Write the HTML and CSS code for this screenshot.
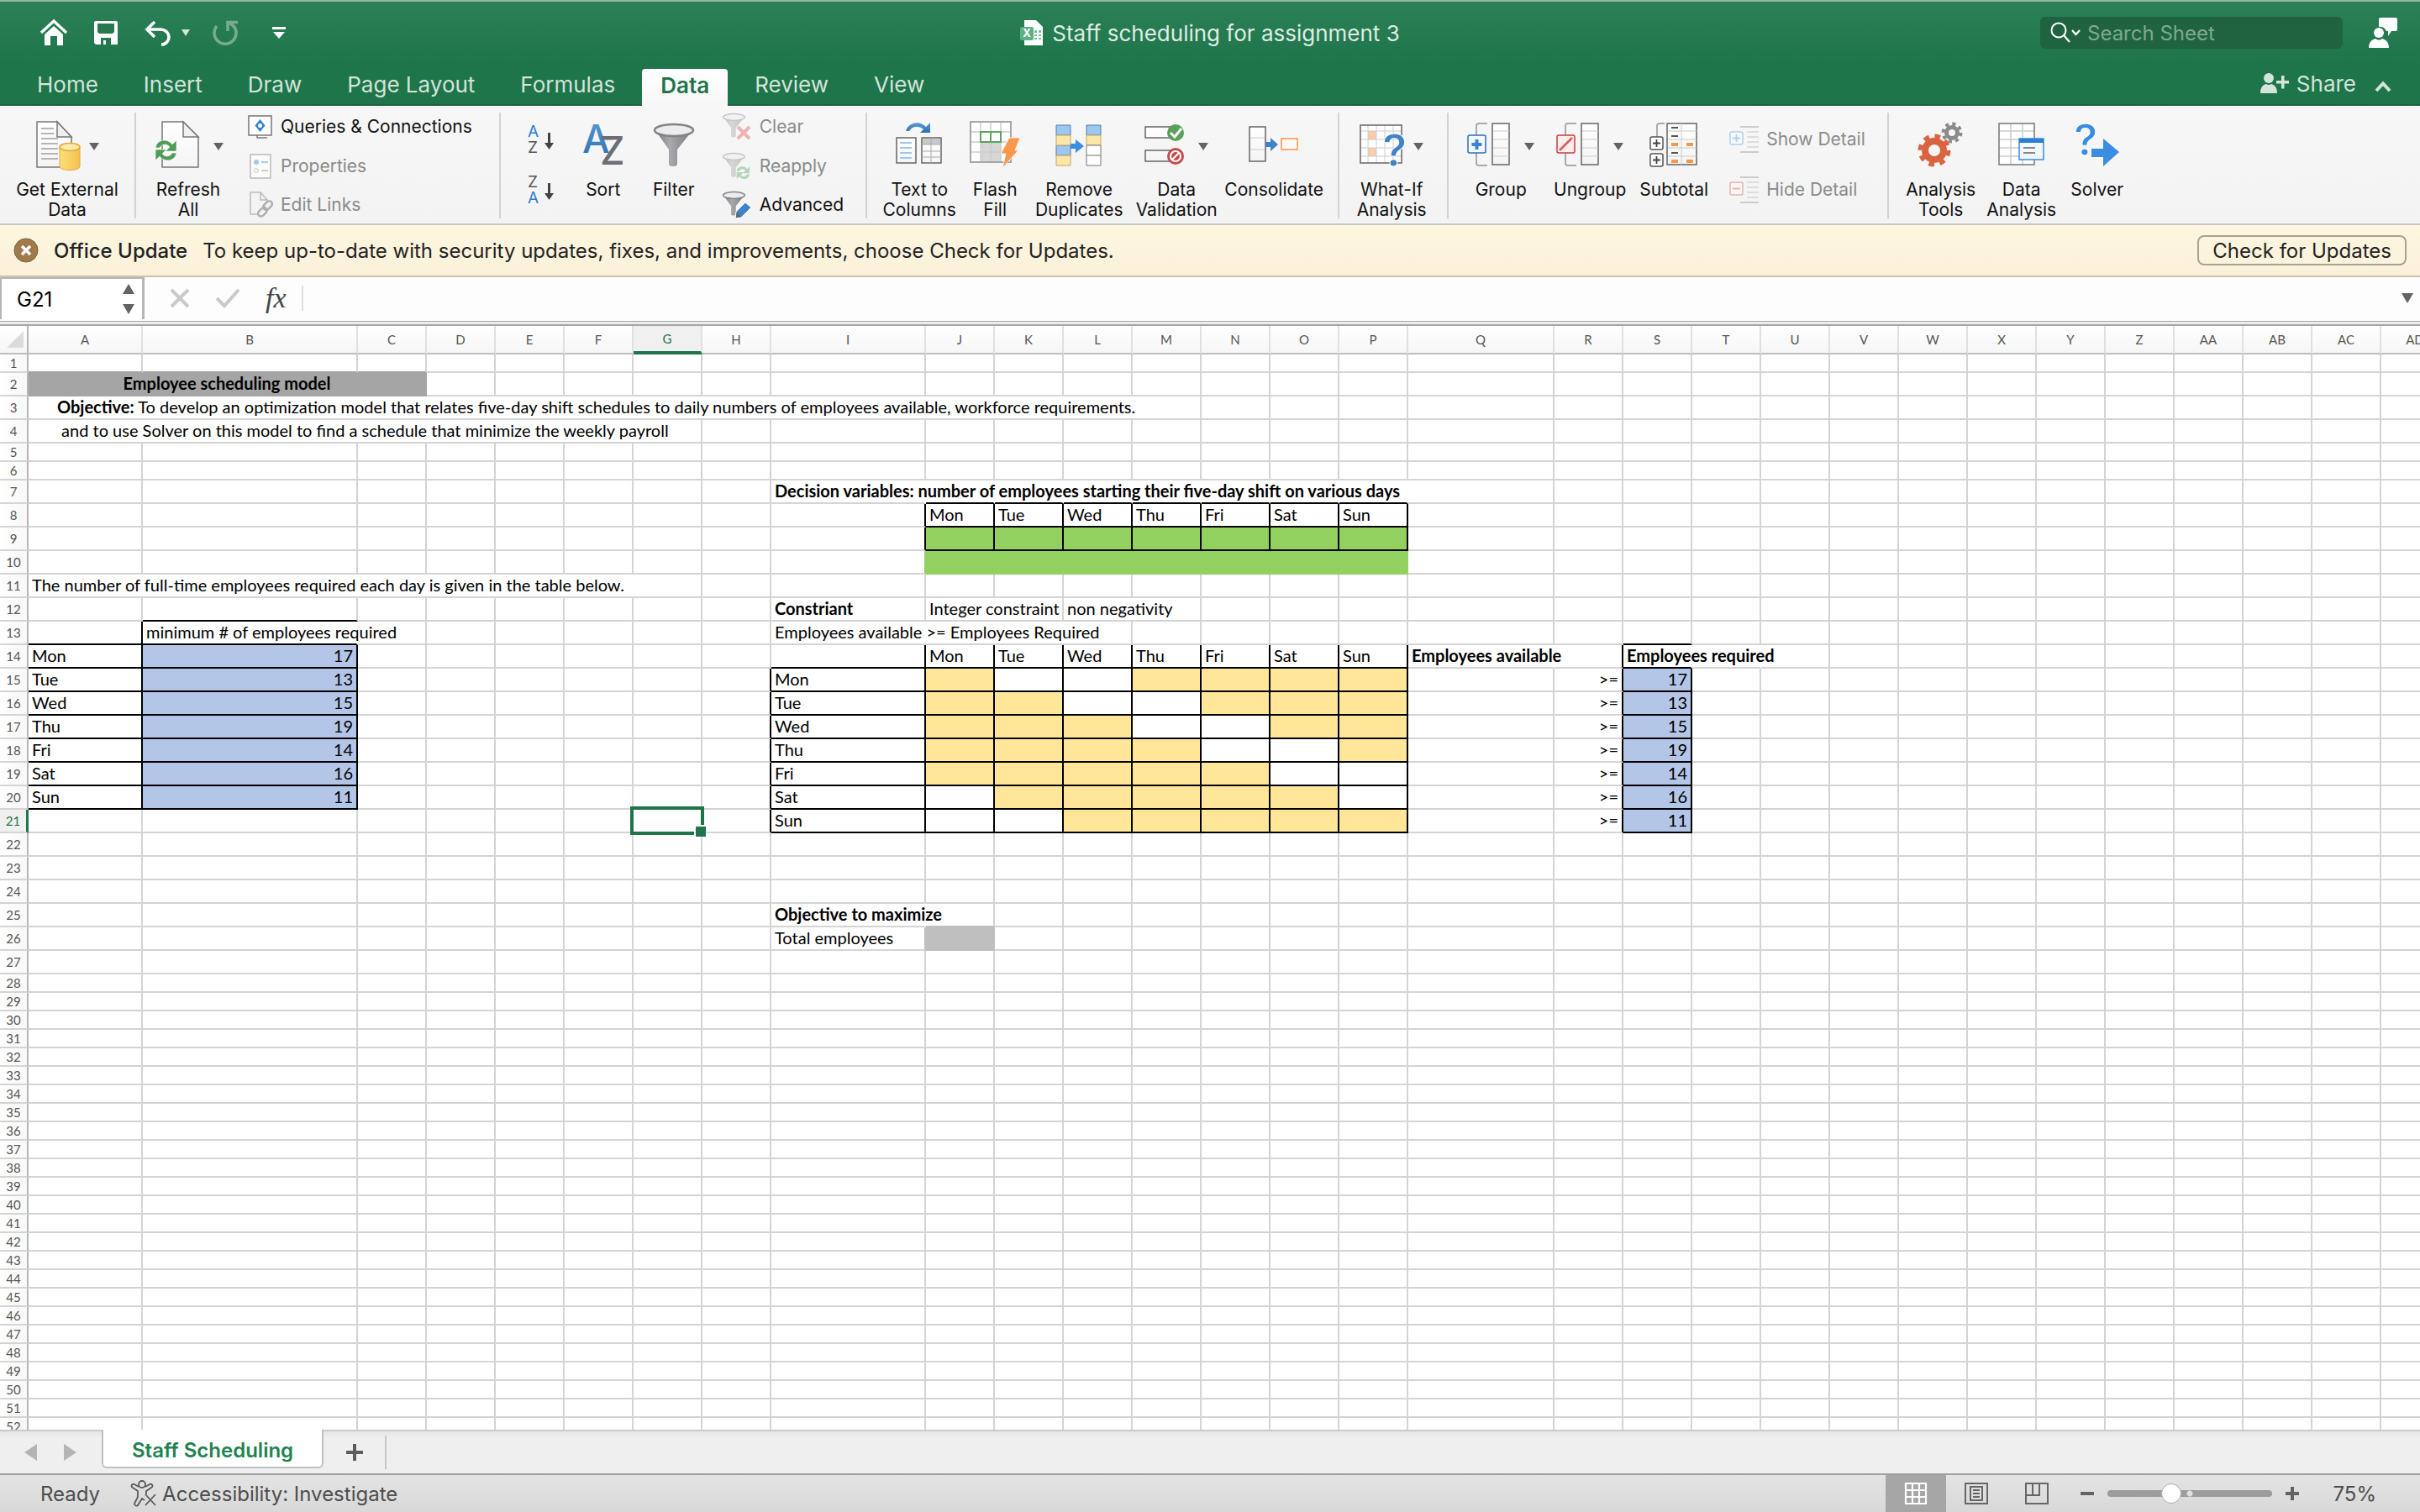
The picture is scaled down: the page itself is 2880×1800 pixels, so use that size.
FILE: index.html
```html
<!DOCTYPE html>
<html lang="en">
<head>
    <meta charset="UTF-8">
    <meta name="viewport" content="width=device-width, initial-scale=1.0">
    <title>Staff scheduling for assignment 3</title>
    <link rel="stylesheet" href="styles.css">
</head>
<body>
    <header class="app-header">
        <div class="title-row">
            <div class="quick-access">
                <button class="icon-btn" aria-label="Home">
                    <svg width="32" height="32" viewBox="0 0 32 32"><path d="M1 16 16 2l15 14" fill="none" stroke="#fff" stroke-width="3.4"/><path d="M5 18 16 8l11 10v13h-7V20h-8v11H5z" fill="#fff"/></svg>
                </button>
                <button class="icon-btn" aria-label="Save">
                    <svg width="32" height="32" viewBox="0 0 32 32"><path d="M4 2h24a2 2 0 0 1 2 2v26H4l-2-2V4a2 2 0 0 1 2-2z" fill="#fff"/><path d="M6 5h20v10l-2 2H8l-2-2z" fill="#26784e"/><path d="M10 22h12v8h-6v-5h-3v5h-3z" fill="#26784e"/></svg>
                </button>
                <button class="icon-btn undo" aria-label="Undo">
                    <svg width="32" height="32" viewBox="0 0 32 32"><path d="M12 3 3 12l9 9M4 12h14c8 0 11 5 11 9s-3 9-9 9" fill="none" stroke="#fff" stroke-width="3.6"/></svg>
                    <svg width="10" height="8" viewBox="0 0 10 8"><path d="M0 0h10L5 8z" fill="#d3e4da"/></svg>
                </button>
                <button class="icon-btn redo" aria-label="Redo" disabled>
                    <svg width="32" height="32" viewBox="0 0 32 32"><path d="M6 8a13 13 0 1 0 20 0L21 4M19 14V3.500h12" fill="none" stroke="#78ab8e" stroke-width="3.6"/></svg>
                </button>
                <button class="icon-btn" aria-label="Customize toolbar">
                    <svg width="16" height="16" viewBox="0 0 16 16"><path d="M0 1h16v3H0zM1 7h14l-7 8z" fill="#fff"/></svg>
                </button>
            </div>
            <h1 class="doc-title">
                <svg width="28" height="32" viewBox="0 0 28 32"><path d="M5 1h14l8 8v22H5z" fill="#fff"/><path d="M17 13h3v3h-3zm5 0h3v3h-3zm-5 5h3v2h-3zm5 0h3v2h-3zm-5 4h3v2h-3zm5 0h3v2h-3z" fill="#7cc09c"/><rect y="9" width="16" height="16" rx="2" fill="#5fae86"/><text x="8" y="21" class="file-x">X</text></svg>
                Staff scheduling for assignment 3
            </h1>
            <div class="title-tools">
                <label class="search">
                    <svg width="36" height="26" viewBox="0 0 36 26"><circle cx="10" cy="10" r="8.500" fill="none" stroke="#fff" stroke-width="2"/><path d="m16 16 7 8M26 10l4.500 5 4.500-5" fill="none" stroke="#fff" stroke-width="2.200"/></svg>
                    <input type="text" placeholder="Search Sheet" aria-label="Search Sheet">
                </label>
                <button class="icon-btn" aria-label="Feedback">
                    <svg width="36" height="38" viewBox="0 0 36 38"><path d="M15 1h18a2 2 0 0 1 2 2v12a2 2 0 0 1-2 2h-5l-4 6v-6h-2a8 8 0 0 0-9-5V3a2 2 0 0 1 2-2z" fill="#fff"/><circle cx="13" cy="19" r="6" fill="#fff"/><path d="M1 37c0-7 4-10 8-11q4 3 8 0c4 1 8 4 8 11z" fill="#fff"/></svg>
                </button>
            </div>
        </div>
        <nav class="tabs">
            <a class="tab" href="#">Home</a>
            <a class="tab" href="#">Insert</a>
            <a class="tab" href="#">Draw</a>
            <a class="tab" href="#">Page Layout</a>
            <a class="tab" href="#">Formulas</a>
            <a class="tab active" href="#">Data</a>
            <a class="tab" href="#">Review</a>
            <a class="tab" href="#">View</a>
            <button class="share">
                <svg width="36" height="26" viewBox="0 0 36 26"><circle cx="11" cy="7" r="6" fill="#d3e4da"/><path d="M1 25c0-7 3-10 7-11q3 2 6 0c4 1 7 4 7 11zM26 4h3.500v6H35v3.500h-5.500v6H26v-6h-6V10h6z" fill="#d3e4da"/></svg>
                Share
            </button>
            <button class="icon-btn collapse" aria-label="Collapse ribbon">
                <svg width="20" height="14" viewBox="0 0 20 14"><path d="m2 12 8-8.500 8 8.500" fill="none" stroke="#d3e4da" stroke-width="4"/></svg>
            </button>
        </nav>
    </header>

    <svg width="0" height="0" class="defs">
        <defs>
            <linearGradient id="blue" x1="0" y1="0" x2="0" y2="1"><stop offset="0" stop-color="#5b9bd5"/><stop offset="1" stop-color="#2a6fb5"/></linearGradient>
            <linearGradient id="grey" x1="0" y1="0" x2="1" y2="0"><stop offset="0" stop-color="#77777b"/><stop offset=".4" stop-color="#a9a9ad"/><stop offset="1" stop-color="#77777b"/></linearGradient>
            <linearGradient id="gold" x1="0" y1="0" x2="1" y2="0"><stop offset="0" stop-color="#fddf7c"/><stop offset="1" stop-color="#f5c04e"/></linearGradient>
            <linearGradient id="page" x1="0" y1="0" x2="0" y2="1"><stop offset="0" stop-color="#fff"/><stop offset="1" stop-color="#f4f4f4"/></linearGradient>
            <path id="cycle" d="M1 11C2 4 9 0 16 3c2 1 4 2 5 4l5-5v13H13l5-5c-4-5-10-3-12 1zM26 17c-1 7-8 11-15 8-2-1-4-2-5-4l-5 5V13h13l-5 5c4 5 10 3 12-1z"/>
            <g id="funnel"><path d="M1 7 18 31v17q0 3 4 3h2q4 0 4-3V31L47 7z" fill="url(#grey)"/><ellipse cx="24" cy="8" rx="23" ry="7" fill="#ececee" stroke="#838387" stroke-width="2.500"/></g>
        </defs>
    </svg>

    <section class="ribbon">
        <div class="group">
            <button class="tool tool-xl">
                <span class="tool-icon">
                    <svg width="54" height="64" viewBox="0 0 54 64"><path d="M2 3h24l17 18v36H2z" fill="url(#page)" stroke="#77777b" stroke-width="1.500"/><path d="M26 3v18h17z" fill="#f0f0f0" stroke="#77777b" stroke-width="1.500"/><path d="M7 11h15M7 17h15M7 23h20M7 29h20M7 35h20M7 41h20M7 47h20" stroke="#b5b5b8" stroke-width="2"/><path d="M29 33v23c0 6 24 6 24 0V33z" fill="url(#gold)" stroke="#e0a93c"/><ellipse cx="41" cy="33" rx="12" ry="4.500" fill="#fde9a8" stroke="#e0a93c" stroke-width="1.500"/></svg>
                    <i class="arrow"></i>
                </span>
                Get External<br>Data
            </button>
        </div>
        <div class="group">
            <button class="tool tool-md">
                <span class="tool-icon">
                    <svg width="56" height="64" viewBox="0 0 56 64"><path d="M11 3h25l18 18v36H11z" fill="url(#page)" stroke="#77777b" stroke-width="1.500"/><path d="M36 3v18h18z" fill="#f0f0f0" stroke="#77777b" stroke-width="1.500"/><use href="#cycle" x="2" y="23" fill="#4f9d54" stroke="#fff" stroke-width=".6"/></svg>
                    <i class="arrow far"></i>
                </span>
                Refresh<br>All
            </button>
            <div class="tool-list query-list">
                <button class="tool-row">
                    <svg width="32" height="32" viewBox="0 0 32 32"><path d="M2 3h27v23H2zM12 26v3h12" fill="#fff" stroke="#77777b" stroke-width="1.500"/><path d="M15.500 7l6 7.500-6 7.500-6-7.500z" fill="#2b7fd4"/><circle cx="15.500" cy="14.500" r="2.500" fill="#fff"/></svg>
                    Queries &amp; Connections
                </button>
                <button class="tool-row" disabled>
                    <svg width="32" height="32" viewBox="0 0 32 32"><path d="M4 2h24v28H4z" fill="#fbfbfb" stroke="#bbb" stroke-width="1.500"/><circle cx="11" cy="11" r="3" fill="#a9c9e8"/><circle cx="11" cy="21" r="2.500" fill="none" stroke="#ccc"/><path d="M17 11h8" stroke="#a9c9e8" stroke-width="2"/><path d="M17 21h8" stroke="#ccc" stroke-width="2"/></svg>
                    Properties
                </button>
                <button class="tool-row" disabled>
                    <svg width="32" height="32" viewBox="0 0 32 32"><path d="M12 27H4V1h12l8 9v3M16 1v9h8" fill="none" stroke="#bbb" stroke-width="1.500"/><g fill="none" stroke="#aeaeae" stroke-width="2.500"><rect x="12" y="21" width="12" height="7" rx="3.500" transform="rotate(-45 18 24)"/><rect x="19" y="13" width="12" height="7" rx="3.500" transform="rotate(-45 25 17)"/></g></svg>
                    Edit Links
                </button>
            </div>
        </div>
        <div class="group">
            <div class="az-list">
                <button class="az" aria-label="Sort ascending">
                    <svg width="36" height="36" viewBox="0 0 36 36"><text x="0" y="15" class="az-a">A</text><text x="0" y="34" class="az-z">Z</text><path d="M24 10h3v12h4l-5.500 8L20 22h4z" fill="#444"/></svg>
                </button>
                <button class="az" aria-label="Sort descending">
                    <svg width="36" height="36" viewBox="0 0 36 36"><text x="0" y="15" class="az-z">Z</text><text x="0" y="34" class="az-a">A</text><path d="M24 10h3v12h4l-5.500 8L20 22h4z" fill="#444"/></svg>
                </button>
            </div>
            <button class="tool tool-sm">
                <span class="tool-icon"><svg width="52" height="64" viewBox="0 0 52 64"><text x="1" y="40" class="sort-a">A</text><text x="22" y="54" class="sort-z">Z</text></svg></span>
                Sort
            </button>
            <button class="tool tool-sm">
                <span class="tool-icon"><svg width="50" height="64" viewBox="0 0 50 64"><use href="#funnel" x="1" y="5"/></svg></span>
                Filter
            </button>
            <div class="tool-list">
                <button class="tool-row" disabled>
                    <svg width="36" height="32" viewBox="0 0 36 32"><g opacity=".4"><use href="#funnel" transform="scale(.56)"/></g><path d="m18 16 14 14m0-14L18 30" stroke="#edb3b3" stroke-width="4"/></svg>
                    Clear
                </button>
                <button class="tool-row" disabled>
                    <svg width="36" height="32" viewBox="0 0 36 32"><g opacity=".4"><use href="#funnel" transform="scale(.56)"/></g><use href="#cycle" transform="translate(16 15) scale(.62)" fill="#b5d5b8"/></svg>
                    Reapply
                </button>
                <button class="tool-row">
                    <svg width="36" height="32" viewBox="0 0 36 32"><use href="#funnel" transform="scale(.56)"/><path d="m16 24 11-11 7 6-12 12-7 1z" fill="#3f83c8" stroke="#fff"/><path d="m17 24 5 6-6 1z" fill="#666"/></svg>
                    Advanced
                </button>
            </div>
        </div>
        <div class="group">
            <button class="tool tool-md">
                <span class="tool-icon">
                    <svg width="56" height="64" viewBox="0 0 56 64"><g fill="url(#page)" stroke="#666" stroke-width="1.500"><path d="M1 22h23v30H1zM31 22h23v30H31z"/></g><path d="M32 23h21v7H32z" fill="#c9c9cc"/><path d="M42 22v30M31 30h23M31 38h23M31 45h23" stroke="#aaa"/><path d="M5 28h14M5 34h14M5 40h14M5 46h14" stroke="#a3c6e8" stroke-width="2"/><path d="M12 14C15 3 29 1 36 9l5-5v12H29l4-4c-6-5-13-4-17 2z" fill="url(#blue)"/></svg>
                </span>
                Text to<br>Columns
            </button>
            <button class="tool tool-sm">
                <span class="tool-icon">
                    <svg width="62" height="64" viewBox="0 0 62 64"><path d="M2 3h48v48H2z" fill="#fff"/><path d="M14 28h24v23H14z" fill="#d6d6d6"/><path d="M14 3v48M26 3v48M38 3v48M2 15h48M2 27h48M2 39h48" stroke="#ccc" stroke-width="1.500"/><path d="M2 3h48v48H2z" fill="none" stroke="#a5a5a5" stroke-width="2"/><path d="M14 15h24v12H14zM26 15v12" fill="#fff" stroke="#5ea361" stroke-width="2"/><path d="M48 22h13l-6 15h4L40 58l4-17h-6z" fill="#fd9749" stroke="#f4f4f4" stroke-width="1"/></svg>
                </span>
                Flash<br>Fill
            </button>
            <button class="tool tool-lg">
                <span class="tool-icon">
                    <svg width="56" height="64" viewBox="0 0 56 64"><path d="M1 7h17v12H1zM1 31h17v12H1zM37 7h17v12H37z" fill="#9cc7f1" stroke="#4f7fae"/><path d="M1 19h17v12H1zM1 43h17v12H1zM37 19h17v12H37z" fill="#fee6a8" stroke="#c2a766"/><path d="M37 31h17v24H37zM37 43h17" fill="#fdfdfd" stroke="#777"/><path d="M18 29h6v-5l10 8-10 8v-5h-6z" fill="#3a8de0"/></svg>
                </span>
                Remove<br>Duplicates
            </button>
            <button class="tool tool-lg">
                <span class="tool-icon">
                    <svg width="48" height="64" viewBox="0 0 48 64"><path d="M1 9h30v13H1zM1 37h30v13H1z" fill="url(#page)" stroke="#666" stroke-width="1.500"/><circle cx="37" cy="16" r="10" fill="#5a9f5a"/><path d="m31 16 5 5 8-10" fill="none" stroke="#fff" stroke-width="3"/><circle cx="37" cy="44" r="10" fill="#c9494b"/><circle cx="37" cy="44" r="6" fill="none" stroke="#fff" stroke-width="2.200"/><path d="m32.500 48.500 9-9" stroke="#fff" stroke-width="2.200"/></svg>
                    <i class="arrow far"></i>
                </span>
                Data<br>Validation
            </button>
            <button class="tool tool-lg">
                <span class="tool-icon">
                    <svg width="60" height="64" viewBox="0 0 60 64"><path d="M1 9h19v41H1z" fill="url(#page)" stroke="#666" stroke-width="1.500"/><path d="M2 22h17M2 36h17" stroke="#ccc"/><path d="M20 27h6v-5l9 8-9 8v-5h-6z" fill="#3f83c8"/><path d="M39 23h19v13H39z" fill="#fffaf5" stroke="#f7964c" stroke-width="1.500"/></svg>
                </span>
                Consolidate
            </button>
        </div>
        <div class="group">
            <button class="tool tool-md">
                <span class="tool-icon">
                    <svg width="54" height="64" viewBox="0 0 54 64"><path d="M1 7h49v45H1z" fill="#fff"/><path d="M10 14h10v10H10zM10 34h10v10H10z" fill="#f9cba6"/><path d="M10 7v45M20 7v45M30 7v45M40 7v45M1 14h49M1 24h49M1 34h49M1 44h49" stroke="#ccc"/><path d="M1 7h49v45H1z" fill="none" stroke="#666" stroke-width="1.500"/><text x="27" y="56" class="what-if">?</text></svg>
                    <i class="arrow"></i>
                </span>
                What-If<br>Analysis
            </button>
        </div>
        <div class="group">
            <button class="tool tool-md">
                <span class="tool-icon">
                    <svg width="52" height="64" viewBox="0 0 52 64"><path d="M24 5H14q-3 0-3 3v44q0 3 3 3h10" fill="none" stroke="#aaa" stroke-width="2"/><path d="M30 5h20v49H30z" fill="url(#page)" stroke="#666" stroke-width="1.500"/><path d="M31 14h19M31 24h19M31 34h19M31 44h19" stroke="#ccc"/><rect x="1" y="19" width="21" height="21" rx="2" fill="#f3f8fd" stroke="#2870b8" stroke-width="1.500"/><path d="M11.500 24v12M5.500 30h12" stroke="#3f83c8" stroke-width="4"/></svg>
                    <i class="arrow far"></i>
                </span>
                Group
            </button>
            <button class="tool tool-lg">
                <span class="tool-icon">
                    <svg width="52" height="64" viewBox="0 0 52 64"><path d="M24 5H14q-3 0-3 3v44q0 3 3 3h10" fill="none" stroke="#aaa" stroke-width="2"/><path d="M30 5h20v49H30z" fill="url(#page)" stroke="#666" stroke-width="1.500"/><path d="M31 14h19M31 24h19M31 34h19M31 44h19" stroke="#ccc"/><rect x="1" y="19" width="21" height="21" rx="2" fill="#fdeeee" stroke="#c93a3d" stroke-width="1.500"/><path d="m4 37 15-15" stroke="#d9595b" stroke-width="2.500"/></svg>
                    <i class="arrow far"></i>
                </span>
                Ungroup
            </button>
            <button class="tool tool-sm">
                <span class="tool-icon">
                    <svg width="58" height="64" viewBox="0 0 58 64"><path d="M18 5h-6q-3 0-3 3v14" fill="none" stroke="#aaa" stroke-width="2"/><path d="M21 5h35v49H21z" fill="url(#page)" stroke="#666" stroke-width="1.500"/><path d="M38 5v49M22 14h34M22 24h34M22 34h34M22 44h34" stroke="#ccc"/><path d="M26 10h8M26 20h8M26 40h8" stroke="#555" stroke-width="2"/><path d="M26 30h8M44 30h8M26 50h8M44 50h8" stroke="#f7964c" stroke-width="4"/><rect x="1" y="21" width="15" height="15" rx="2" fill="#fff" stroke="#555" stroke-width="1.500"/><rect x="1" y="41" width="15" height="15" rx="2" fill="#fff" stroke="#555" stroke-width="1.500"/><path d="M8.500 24v9M4 28.500h9M8.500 44v9M4 48.500h9" stroke="#444" stroke-width="1.800"/></svg>
                </span>
                Subtotal
            </button>
            <div class="tool-list detail-list">
                <button class="tool-row" disabled>
                    <svg width="36" height="32" viewBox="0 0 36 32"><path d="M13 1h22M13 31h22" stroke="#ccc" stroke-width="2"/><path d="M21 7h14M21 13h14M21 19h14M21 25h14" stroke="#ddd" stroke-width="2"/><rect x="1" y="7" width="15" height="15" rx="2" fill="#f4f9fd" stroke="#b3cfe8" stroke-width="1.500"/><path d="M8.500 10v9M4 14.500h9" stroke="#b3cfe8" stroke-width="1.800"/></svg>
                    Show Detail
                </button>
                <button class="tool-row" disabled>
                    <svg width="36" height="32" viewBox="0 0 36 32"><path d="M13 1h22M13 31h22" stroke="#ccc" stroke-width="2"/><path d="M21 7h14M21 13h14M21 19h14M21 25h14" stroke="#ddd" stroke-width="2"/><rect x="1" y="7" width="15" height="15" rx="2" fill="#fdf4f4" stroke="#e3b2b3" stroke-width="1.500"/><path d="M4 14.500h9" stroke="#e3b2b3" stroke-width="1.800"/></svg>
                    Hide Detail
                </button>
            </div>
        </div>
        <div class="group">
            <button class="tool tool-md">
                <span class="tool-icon">
                    <svg width="56" height="64" viewBox="0 0 56 64"><g fill="none"><circle cx="41" cy="16" r="6.500" stroke="#8b8b8f" stroke-width="5"/><circle cx="41" cy="16" r="10.500" stroke="#8b8b8f" stroke-width="4" stroke-dasharray="4.120 4.120"/><circle cx="20" cy="37" r="11" stroke="#d9643f" stroke-width="8"/><circle cx="20" cy="37" r="17" stroke="#d9643f" stroke-width="5" stroke-dasharray="6.670 6.670"/></g></svg>
                </span>
                Analysis<br>Tools
            </button>
            <button class="tool tool-md">
                <span class="tool-icon">
                    <svg width="56" height="64" viewBox="0 0 56 64"><path d="M1 5h42v49H1z" fill="#fff"/><path d="M15 5v49M29 5v49M1 14h42M1 24h42M1 34h42M1 44h42" stroke="#ccc" stroke-width="1.500"/><path d="M1 5h42v49H1z" fill="none" stroke="#777" stroke-width="1.500"/><path d="M25 23h29v25H25z" fill="#f1f7fd" stroke="#3a8de0" stroke-width="1.500"/><path d="M25 23h29v5H25z" fill="#2b7fd4"/><path d="M30 34h14M30 40h14" stroke="#888" stroke-width="2"/></svg>
                </span>
                Data<br>Analysis
            </button>
            <button class="tool tool-sm">
                <span class="tool-icon">
                    <svg width="56" height="64" viewBox="0 0 56 64"><text x="0" y="43" class="solver-q">?</text><path d="M21 35h14V23l19 16-19 17V45H21z" fill="#3a8de0"/></svg>
                </span>
                Solver
            </button>
        </div>
    </section>

    <div class="update-bar">
        <button class="icon-btn" aria-label="Dismiss">
            <svg width="30" height="30" viewBox="0 0 30 30"><circle cx="15" cy="15" r="14" fill="#a17a4c" stroke="#7d5f3b"/><path d="m10 10 10 10m0-10L10 20" stroke="#fff" stroke-width="3.500"/></svg>
        </button>
        <strong>Office Update</strong>
        <span>To keep up-to-date with security updates, fixes, and improvements, choose Check for Updates.</span>
        <button class="update-btn">Check for Updates</button>
    </div>

    <div class="formula-bar">
        <div class="name-box">
            <input type="text" value="G21" aria-label="Name box">
            <svg width="16" height="36" viewBox="0 0 16 36"><path d="M8 0l7 12H1zM8 36l7-12H1z" fill="#636363"/></svg>
        </div>
        <button class="icon-btn" aria-label="Cancel" disabled>
            <svg width="24" height="24" viewBox="0 0 24 24"><path d="m2 2 20 20M22 2 2 22" stroke="#c9c9c9" stroke-width="4"/></svg>
        </button>
        <button class="icon-btn" aria-label="Enter" disabled>
            <svg width="30" height="24" viewBox="0 0 30 24"><path d="m2 12 9 9L28 2" fill="none" stroke="#c9c9c9" stroke-width="4"/></svg>
        </button>
        <button class="fx">fx</button>
        <input class="formula" type="text" aria-label="Formula">
        <button class="icon-btn expand" aria-label="Expand formula bar">
            <svg width="14" height="12" viewBox="0 0 14 12"><path d="M0 0h14L7 12z" fill="#636363"/></svg>
        </button>
    </div>

    <main class="sheet">
        <table id="grid"></table>
    </main>

    <div class="sheet-tabs">
        <button class="icon-btn" aria-label="Previous sheet"><svg width="16" height="20" viewBox="0 0 16 20"><path d="M15 0v20L0 10z" fill="#b4b4b4"/></svg></button>
        <button class="icon-btn" aria-label="Next sheet"><svg width="16" height="20" viewBox="0 0 16 20"><path d="M1 0v20l15-10z" fill="#b4b4b4"/></svg></button>
        <a class="sheet-tab" href="#">Staff Scheduling</a>
        <button class="icon-btn add-sheet" aria-label="Add sheet"><svg width="22" height="22" viewBox="0 0 22 22"><path d="M11 1v20M1 11h20" stroke="#5d5d5d" stroke-width="4"/></svg></button>
    </div>

    <footer class="status-bar">
        <span>Ready</span>
        <button class="access">
            <svg width="32" height="32" viewBox="0 0 32 32" fill="none" stroke="#5a5a5a" stroke-width="1.800"><circle cx="14" cy="5" r="4"/><path d="M10 8 5 5C2 4 0 7 3 9l6 4v7l-4 8c0 3 3 3 4 2l5-8 3 2M18 8l5-3c3-1 5 2 2 4l-6 4v4M18 17l12 13M30 17 18 30"/></svg>
            Accessibility: Investigate
        </button>
        <div class="view-controls">
            <button class="view active" aria-label="Normal view">
                <svg width="28" height="28" viewBox="0 0 28 28"><path d="M2 2h24v24H2zM10 2v24M18 2v24M2 10h24M2 18h24" fill="none" stroke="#fff" stroke-width="2.200"/></svg>
            </button>
            <button class="view" aria-label="Page layout view">
                <svg width="28" height="28" viewBox="0 0 28 28"><path d="M1 2h26v24H1zM7 6h14v16H7zM10 10h8M10 14h8M10 18h8" fill="none" stroke="#666" stroke-width="2"/></svg>
            </button>
            <button class="view" aria-label="Page break view">
                <svg width="28" height="28" viewBox="0 0 28 28"><path d="M1 2h26v24H1zM9 2v14M17 2v14M1 16h17" fill="none" stroke="#666" stroke-width="2"/></svg>
            </button>
        </div>
        <div class="zoom">
            <button class="icon-btn" aria-label="Zoom out"><svg width="16" height="16" viewBox="0 0 16 16"><path d="M0 8h16" stroke="#636363" stroke-width="4"/></svg></button>
            <input type="range" min="0" max="100" value="37" aria-label="Zoom">
            <button class="icon-btn" aria-label="Zoom in"><svg width="16" height="16" viewBox="0 0 16 16"><path d="M0 8h16M8 0v16" stroke="#636363" stroke-width="4"/></svg></button>
            <span class="zoom-value">75%</span>
        </div>
    </footer>

    <script src="script.js"></script>
</body>
</html>
```
FILE: styles.css
```css
* {
    box-sizing: border-box;
}
body {
    margin: 0;
    height: 100vh;
    display: flex;
    flex-direction: column;
    overflow: hidden;
    font-family: Inter, "Liberation Sans", sans-serif;
    font-size: 24px;
    color: #222;
    background: #fff;
}
button, input {
    font: inherit;
    color: inherit;
    background: none;
    border: none;
    padding: 0;
    margin: 0;
}
a {
    color: inherit;
    text-decoration: none;
}
svg {
    display: block;
    flex-shrink: 0;
    overflow: visible;
}
.defs {
    position: absolute;
}
.icon-btn {
    display: flex;
    align-items: center;
}

/* Header */
.app-header {
    border-top: 2px solid #8fb8a2;
    border-bottom: 2px solid #1a6440;
    background: linear-gradient(#2d8057, #1e754a 60%, #1e754a);
}
.title-row {
    display: grid;
    grid-template-columns: 1fr auto 1fr;
    align-items: center;
    height: 74px;
}
.quick-access {
    display: flex;
    align-items: center;
    gap: 30px;
    padding-left: 48px;
}
.undo {
    gap: 12px;
}
.redo {
    margin-right: 10px;
    margin-left: -4px;
}
.doc-title {
    display: flex;
    align-items: center;
    gap: 10px;
    margin: 0;
    font-size: 26px;
    font-weight: 400;
    color: #dfece5;
}
.file-x {
    font-size: 13px;
    font-weight: 700;
    fill: #fff;
    text-anchor: middle;
}
.title-tools {
    display: flex;
    align-items: center;
    justify-content: flex-end;
    gap: 30px;
    padding-right: 26px;
}
.search {
    display: flex;
    align-items: center;
    gap: 8px;
    width: 360px;
    height: 38px;
    padding: 0 12px;
    border-radius: 6px;
    background: #1f6341;
}
.search input {
    flex: 1;
    min-width: 0;
    outline: none;
}
.search input::placeholder {
    color: #7fa992;
    opacity: 1;
}
.tabs {
    display: flex;
    align-items: center;
    gap: 10px;
    height: 42px;
    margin-top: 6px;
    padding: 0 34px 0 22px;
    font-size: 26px;
}
.tab {
    padding: 0 22px;
    height: 44px;
    line-height: 40px;
    color: #d3e4da;
}
.tab.active {
    background: linear-gradient(#fff, #f7f7f7);
    color: #1e754a;
    font-weight: 600;
    border-radius: 4px 4px 0 0;
    margin-bottom: -2px;
}
.share {
    display: flex;
    align-items: center;
    gap: 8px;
    margin-left: auto;
    padding-bottom: 8px;
    color: #d3e4da;
}
.collapse {
    margin-left: 12px;
}

/* Ribbon */
.ribbon {
    display: flex;
    padding: 8px 0 6px;
    background: linear-gradient(#f7f7f7, #f3f3f3);
    border-bottom: 2px solid #c8c8c8;
    font-size: 21px;
    line-height: 24px;
}
.group {
    display: flex;
    padding: 0 18px 0 14px;
    border-right: 2px solid #d2d2d2;
}
.group:first-child {
    padding: 0;
}
.group:last-child {
    border-right: none;
}
.tool {
    display: flex;
    flex-direction: column;
    align-items: center;
    height: 126px;
    padding-top: 8px;
    color: #111;
    white-space: nowrap;
}
.tool-sm { width: 84px; }
.tool-md { width: 96px; }
.tool-lg { width: 116px; }
.tool-xl { width: 160px; }
.tool-icon {
    display: flex;
    align-items: center;
    gap: 10px;
    margin-bottom: 8px;
}
.arrow {
    border: 6px solid transparent;
    border-top: 9px solid #636363;
    border-bottom: none;
}
.arrow.far {
    margin-left: 6px;
}
.tool-list {
    display: flex;
    flex-direction: column;
    justify-content: space-between;
    padding: 1px 8px 0 16px;
}
.tool-row {
    display: flex;
    align-items: center;
    gap: 8px;
    height: 32px;
    color: #111;
    white-space: nowrap;
}
.tool-row:disabled {
    color: #8a8a8a;
}
.query-list {
    padding-left: 22px;
    padding-right: 14px;
}
.detail-list {
    justify-content: flex-start;
    gap: 28px;
    padding: 16px 8px 0 24px;
}
.az-list {
    display: flex;
    flex-direction: column;
    gap: 24px;
    padding: 14px 12px 0 18px;
}
.az-a, .az-z {
    font-size: 19px;
    fill: #555;
}
.az-a {
    fill: #2b7fd4;
}
.sort-a, .sort-z {
    font-size: 46px;
    font-weight: 500;
    fill: url(#blue);
}
.sort-z {
    fill: #6e6e72;
}
.what-if, .solver-q {
    font-size: 54px;
    font-weight: 600;
    fill: #3f83c8;
    stroke: #fff;
    stroke-width: 1px;
}
.solver-q {
    font-size: 52px;
    fill: #3a8de0;
}

/* Update notice */
.update-bar {
    display: flex;
    align-items: center;
    gap: 18px;
    height: 62px;
    padding: 0 16px;
    background: linear-gradient(#fef6e0, #fbf1da);
    border-bottom: 2px solid #c9c2ae;
}
.update-bar strong {
    font-weight: 500;
}
.update-btn {
    height: 36px;
    margin-left: auto;
    padding: 0 16px;
    border: 2px solid #a8a294;
    border-radius: 8px;
}

/* Formula bar */
.formula-bar {
    display: flex;
    align-items: center;
    height: 58px;
    gap: 30px;
    padding-bottom: 6px;
    border-bottom: 2px solid #a6a6a6;
    background: linear-gradient(#fdfdfd 52px, #a6a6a6 52px, #a6a6a6 53px, #ececec 53px);
}
.name-box {
    display: flex;
    align-items: center;
    width: 172px;
    height: 50px;
    padding: 0 8px 0 18px;
    border: 2px solid #b5b5b5;
    border-width: 2px 3px 0 2px;
    background: #fff;
}
.name-box input {
    flex: 1;
    min-width: 0;
    color: #000;
}
.fx {
    font: italic 34px "Liberation Serif", serif;
    line-height: 36px;
    color: #444;
}
.formula {
    flex: 1;
    height: 30px;
    margin-left: -12px;
    border-left: 2px solid #ddd;
}
.expand {
    padding-right: 8px;
}

/* Grid */
.sheet {
    flex: 1;
    min-height: 0;
    overflow: hidden;
}
#grid {
    table-layout: fixed;
    border-collapse: separate;
    border-spacing: 0;
    font-family: Lato, sans-serif;
    font-size: 20px;
    line-height: 20px;
    color: #000;
}
#grid th, #grid td {
    padding: 0 4px;
    border-right: 2px solid #d4d4d4;
    border-bottom: 2px solid #d4d4d4;
    white-space: nowrap;
    text-align: left;
    vertical-align: middle;
}
#grid td {
    padding-bottom: 2px;
}
#grid th {
    padding: 0;
    font-size: 15px;
    font-weight: 400;
    color: #555;
    text-align: center;
    background: #fafafa;
}
#grid thead th {
    height: 34px;
    border-bottom-color: #bdbdbd;
    border-right-color: #e0e0e0;
    background: linear-gradient(#fff, #f6f6f6);
}
#grid tbody th, #grid thead th:first-child {
    border-right-color: #b5b5b5;
}
#grid tbody th {
    background: linear-gradient(90deg, #fff, #f8f8f8);
}
#grid .corner svg {
    margin-left: auto;
    margin-right: 4px;
}
#grid thead .current {
    border-bottom: 4px solid #1e754a;
    color: #1e754a;
    background: #f0f0f0;
}
#grid tbody .current {
    border-right: 3px solid #1e754a;
    color: #1e754a;
    background: #f0f0f0;
}
#grid .short { height: 22px; }
#grid .tall { height: 28px; }
#grid .open { border-right-color: #fff; }
#grid .right { border-right-color: #000; }
#grid .bottom { border-bottom-color: #000; }
#grid .bold { font-weight: 700; }
#grid .num { text-align: right; }
#grid .center { text-align: center; }
#grid .clip { overflow: hidden; }
#grid .blue { background: #b4c6e7; }
#grid .yellow { background: #ffe699; }
#grid .green { background: #92d05f; }
#grid .gray {
    background: #a5a5a5;
    border-color: #a5a5a5;
}
#grid .silver {
    background: #bfbfbf;
    border-color: #bfbfbf;
}
#grid .edge-gray { border-bottom-color: #a5a5a5; }
#grid .green-plain { border-color: #92d05f; }
#grid .edge-green { border-right-color: #92d05f; }
#grid .silver-right { border-right-color: #bfbfbf; }
#grid .silver-bottom { border-bottom-color: #bfbfbf; }
#grid .intro { padding-left: 34px; }
#grid .selected {
    position: relative;
}
.selection {
    position: absolute;
    top: -4px;
    right: -4px;
    bottom: -4px;
    left: -4px;
    border: 4px solid #1e754a;
}
.selection::after {
    content: "";
    position: absolute;
    right: -6px;
    bottom: -6px;
    width: 12px;
    height: 12px;
    border: 2px solid #fff;
    border-width: 2px 0 0 2px;
    background: #1e754a;
    background-clip: padding-box;
}

/* Sheet tabs */
.sheet-tabs {
    display: flex;
    align-items: center;
    height: 52px;
    padding-left: 29px;
    border-top: 2px solid #cacaca;
    background: linear-gradient(#e6e6e6, #efefef 8px);
}
.sheet-tabs .icon-btn {
    margin-right: 30px;
}
.sheet-tab {
    align-self: flex-start;
    height: 46px;
    margin-top: -2px;
    padding: 0 34px;
    line-height: 50px;
    font-weight: 600;
    color: #21834f;
    background: #fff;
    border: 2px solid #c0c0c0;
    border-top: none;
    border-radius: 0 0 6px 6px;
}
.sheet-tabs .add-sheet {
    height: 40px;
    margin: 0;
    padding: 0 25px 0 26px;
    border-right: 2px solid #c8c8c8;
}

/* Status bar */
.status-bar {
    display: flex;
    align-items: center;
    height: 46px;
    padding-left: 48px;
    border-top: 2px solid #a0a0a0;
    background: linear-gradient(#e4e4e4, #d8d8d8);
    color: #4d4d4d;
}
.access {
    display: flex;
    align-items: center;
    gap: 6px;
    margin-left: 36px;
}
.view-controls {
    display: flex;
    margin-left: auto;
    height: 100%;
}
.view {
    display: flex;
    align-items: center;
    justify-content: center;
    width: 72px;
}
.view.active {
    background: #a6a6a6;
}
.zoom {
    display: flex;
    align-items: center;
    gap: 16px;
    margin-left: 16px;
    padding-right: 52px;
}
.zoom input {
    appearance: none;
    width: 196px;
    height: 8px;
    border-radius: 4px;
    background: radial-gradient(circle at center, #e0e0e0 3px, #9c9c9c 4px);
}
.zoom input::-webkit-slider-thumb {
    appearance: none;
    width: 24px;
    height: 24px;
    border-radius: 50%;
    border: 1px solid #aaa;
    background: #fff;
}
.zoom-value {
    margin-left: 24px;
}
```
FILE: script.js
```js
const columns = [
    ['A', 136], ['B', 256], ['C', 82], ['D', 82], ['E', 82], ['F', 82], ['G', 82], ['H', 82],
    ['I', 184], ['J', 82], ['K', 82], ['L', 82], ['M', 82], ['N', 82], ['O', 82], ['P', 82],
    ['Q', 174], ['R', 82], ['S', 82], ['T', 82], ['U', 82], ['V', 82], ['W', 82], ['X', 82],
    ['Y', 82], ['Z', 82], ['AA', 82], ['AB', 82], ['AC', 82], ['AD', 82]
];
const headWidth = 34;
const shortRows = [1, 5, 6];
const days = ['Mon', 'Tue', 'Wed', 'Thu', 'Fri', 'Sat', 'Sun'];
const required = [17, 13, 15, 19, 14, 16, 11];
const names = columns.map(c => c[0]);
const cells = {};

function put(ref, cls, html) {
    const cell = cells[ref] || (cells[ref] = { cls: [], html: '', span: 1 });
    if (cls) cell.cls.push(cls);
    if (html !== undefined) cell.html = html;
    return cell;
}

// Apply a class to a run of cells in one row
function run(from, to, row, cls) {
    for (let i = names.indexOf(from); i <= names.indexOf(to); i++) {
        put(names[i] + row, cls);
    }
}

run('A', 'C', 1, 'edge-gray');
put('A2', 'gray bold center', 'Employee scheduling model').span = 3;
put('A3', 'intro', '<b>Objective:</b> To develop an optimization model that relates five-day shift schedules to daily numbers of employees available, workforce requirements.').span = 13;
put('A4', 'intro', '&nbsp;and to use Solver on this model to find a schedule that minimize the weekly payroll').span = 7;
put('A11', '', 'The number of full-time employees required each day is given in the table below.').span = 7;

// Required employees, left table
put('B12', 'bottom');
put('A13', 'right bottom');
put('B13', 'open bottom', 'minimum # of employees required');
days.forEach((day, i) => {
    put('A' + (14 + i), 'right bottom', day);
    put('B' + (14 + i), 'blue right bottom num', required[i]);
});

// Decision variables
put('I7', 'bold', 'Decision variables: number of employees starting their five-day shift on various days');
run('I', 'P', 7, 'open');
run('J', 'P', 7, 'bottom');
put('I8', 'right');
put('I9', 'right');
put('I10', 'edge-green');
days.forEach((day, i) => put(names[9 + i] + 8, 'right bottom', day));
run('J', 'P', 9, 'green right bottom');
run('J', 'P', 10, 'green green-plain');

// Constraints
put('I12', 'bold', 'Constriant');
put('J12', 'clip', 'Integer constraint').span = 2;
put('L12', '', 'non negativity').span = 2;
put('I13', '', 'Employees available &gt;= Employees Required').span = 4;
put('S13', 'bottom');
put('I14', 'right bottom');
days.forEach((day, i) => put(names[9 + i] + 14, 'right bottom', day));
put('Q14', 'bold open', 'Employees available');
put('R14', 'right');
put('S14', 'bold open bottom', 'Employees required');
put('T14', 'open');
days.forEach((day, i) => {
    const row = 15 + i;
    put('H' + row, 'right');
    put('I' + row, 'right bottom', day);
    for (let d = 0; d < 7; d++) {
        // each shift is five days on, two days off
        const off = d === (i + 1) % 7 || d === (i + 2) % 7;
        put(names[9 + d] + row, off ? 'right bottom' : 'yellow right bottom');
    }
    put('R' + row, 'right num', '&gt;=');
    put('S' + row, 'blue right bottom num', required[i]);
});

// Objective
put('I25', 'bold open', 'Objective to maximize');
put('J25', 'silver-bottom');
put('I26', 'silver-right', 'Total employees');
put('J26', 'silver');

put('G21', 'selected', '<div class="selection"></div>');

let html = `<colgroup><col style="width:${headWidth}px">`;
html += columns.map(c => `<col style="width:${c[1]}px">`).join('') + '</colgroup>';
html += '<thead><tr><th class="corner"><svg width="20" height="20" viewBox="0 0 20 20"><path d="M20 0v20H0z" fill="#dcdcdc"/></svg></th>';
html += names.map(n => `<th${n === 'G' ? ' class="current"' : ''}>${n}</th>`).join('') + '</tr></thead><tbody>';

for (let row = 1; row <= 52; row++) {
    const size = shortRows.includes(row) || row > 27 ? 'short' : 'tall';
    html += `<tr class="${size}"><th${row === 21 ? ' class="current"' : ''}>${row}</th>`;
    for (let i = 0; i < names.length; i++) {
        const cell = cells[names[i] + row];
        if (!cell) {
            html += '<td></td>';
            continue;
        }
        html += `<td class="${cell.cls.join(' ')}" colspan="${cell.span}">${cell.html}</td>`;
        i += cell.span - 1;
    }
    html += '</tr>';
}

const grid = document.getElementById('grid');
grid.style.width = columns.reduce((sum, c) => sum + c[1], headWidth) + 'px';
grid.innerHTML = html + '</tbody>';
```
